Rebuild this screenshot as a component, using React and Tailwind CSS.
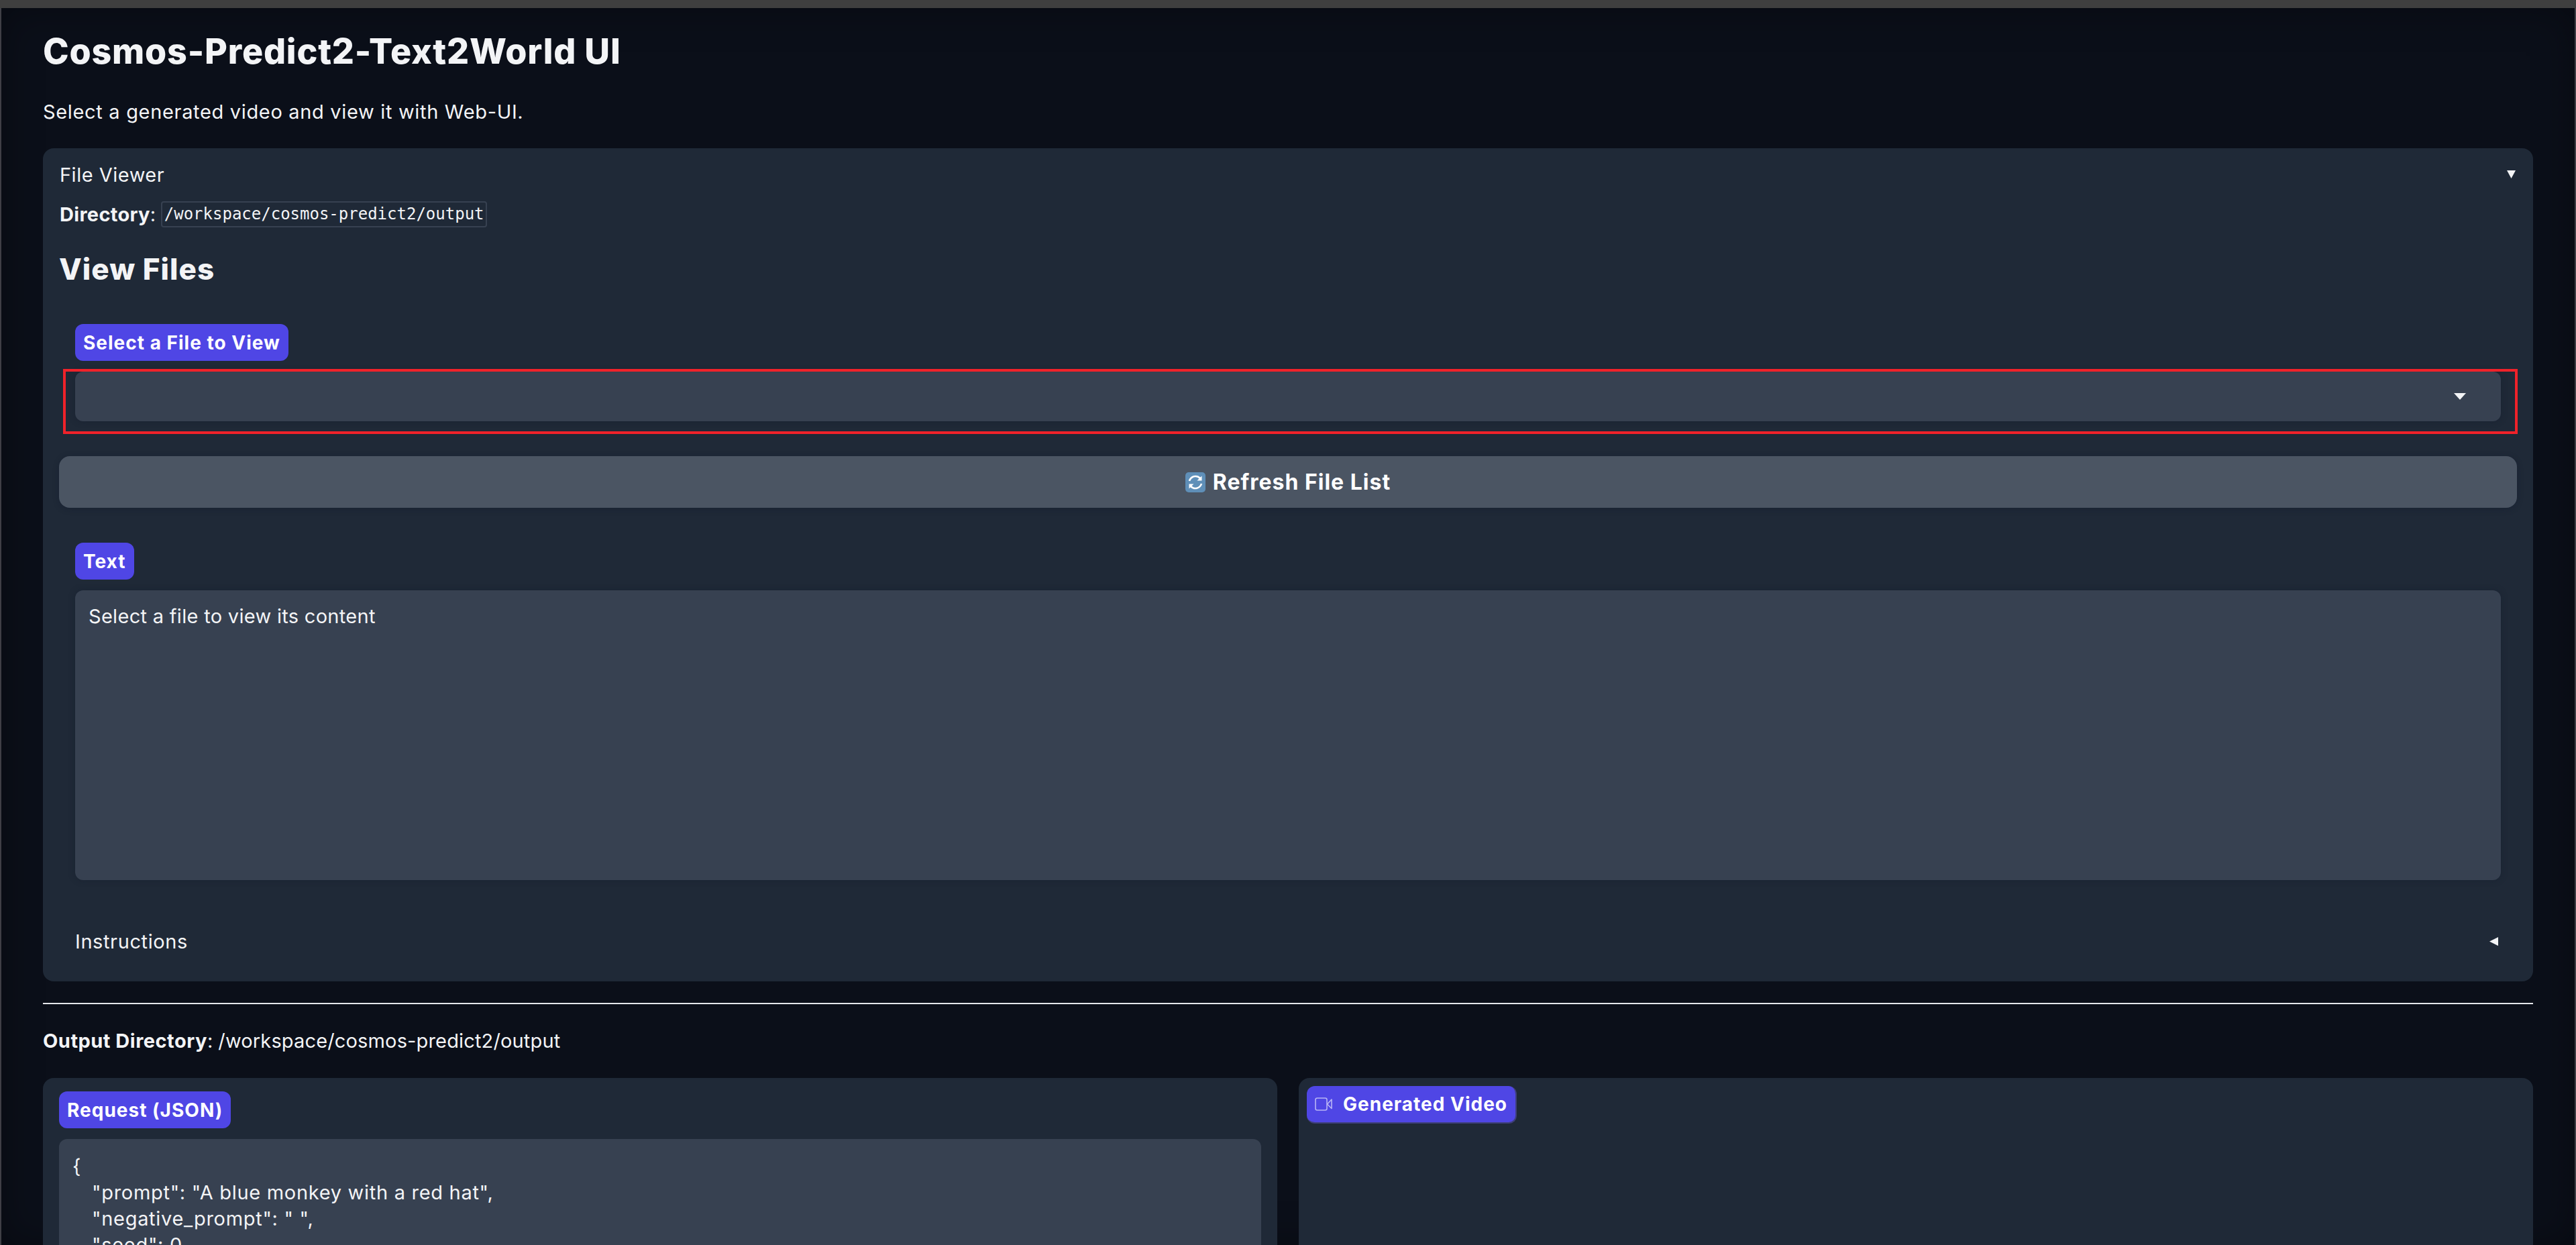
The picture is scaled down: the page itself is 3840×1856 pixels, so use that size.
const sans = "font-['Inter','Liberation_Sans',sans-serif]";

function Tri({ dir = "down", className = "" }) {
  const pts = dir === "down" ? "0,0 100,0 50,100" : "100,0 100,100 0,50";
  return (
    <svg viewBox="0 0 100 100" preserveAspectRatio="none" className={className}>
      <polygon points={pts} fill="#f3f4f6" />
    </svg>
  );
}

function Label({ children }) {
  return (
    <span className="flex h-[55px] items-center rounded-[12px] bg-[#4f46e5] px-[12px] text-[28px] font-bold tracking-[1px] text-white">
      {children}
    </span>
  );
}

function RefreshEmoji() {
  return (
    <svg viewBox="0 0 30 30" className="h-[30px] w-[30px] shrink-0">
      <rect width="30" height="30" rx="5" fill="#5f8fb8" />
      <path d="M6 13a9.500 9.500 0 0 1 16-4" fill="none" stroke="#fff" strokeWidth="2.600" />
      <path d="M24.500 5.500v7h-7z" fill="#fff" />
      <path d="M24 17a9.500 9.500 0 0 1-16 4" fill="none" stroke="#fff" strokeWidth="2.600" />
      <path d="M5.500 24.500v-7h7z" fill="#fff" />
    </svg>
  );
}

function VideoIcon() {
  return (
    <svg viewBox="0 0 26 20" className="h-[20px] w-[26px] shrink-0" fill="none" stroke="#b9b5f5" strokeWidth="1.600" strokeLinejoin="round">
      <rect x="1" y="1" width="17" height="18" rx="2.500" />
      <path d="M25 3 18.500 10 25 16.500z" />
    </svg>
  );
}

export default function App() {
  return (
    <div className={`flex h-screen flex-col overflow-hidden bg-[#0b0f19] text-[#f3f4f6] ${sans}`}>
      <div className="h-[12px] shrink-0 bg-[#3f3f3f]" />
      <div className="flex min-h-0 flex-1 flex-col border-x-2 border-[#3f3f46] px-[62px] shadow-[inset_0_0_60px_rgba(0,0,0,0.35)]">
        <h1 className="mt-[37px] flex h-[56px] shrink-0 items-center text-[52px] leading-none font-extrabold tracking-[0.8px]">Cosmos-Predict2-Text2World UI</h1>
        <p className="mt-[43px] flex h-[36px] shrink-0 items-center text-[29px] leading-none tracking-[0.67px]">Select a generated video and view it with Web-UI.</p>

        <section className="mt-[37px] flex h-[1242px] shrink-0 flex-col rounded-[16px] bg-[#1f2937] px-[24px]">
          <div className="mt-[19px] flex h-[40px] shrink-0 items-center justify-between text-[29px] leading-none">
            <span className="ml-[1px] tracking-[0.5px]">File Viewer</span>
            <Tri className="mr-[2px] h-[12px] w-[13px]" />
          </div>
          <div className="mt-[19px] ml-[1px] flex h-[40px] shrink-0 items-center text-[29px] leading-none">
            <b className="font-bold tracking-[0.3px]">Directory</b>
            <span>:</span>
            <code className="ml-[8px] flex h-[39px] w-[486px] items-center justify-center rounded-[4px] border-2 border-[#374151] font-['DejaVu_Sans_Mono',monospace] text-[24px] leading-none">/workspace/cosmos-predict2/output</code>
          </div>
          <h2 className="mt-[37px] flex h-[50px] shrink-0 items-center text-[44px] leading-none font-extrabold tracking-[1px]">View Files</h2>

          <div className="mt-[57px] ml-[24px] flex shrink-0">
            <Label>Select a File to View</Label>
          </div>
          <div className="relative mt-[16px] mr-[24px] ml-[24px] flex h-[74px] shrink-0 items-center justify-end rounded-[12px] bg-[#374151] pr-[52px] shadow-[0_0_8px_rgba(20,30,45,0.5)]">
            <Tri className="h-[10px] w-[18px]" />
            <div className="pointer-events-none absolute top-[-4px] right-[-25px] bottom-[-19px] left-[-18px] border-4 border-[#f0222a]" />
          </div>

          <button className="mt-[52px] flex h-[77px] shrink-0 items-center justify-center gap-[11px] rounded-[16px] bg-[#4b5563] text-[32px] font-bold tracking-[1px] text-white shadow-[0_2px_8px_rgba(15,23,42,0.35)]">
            <RefreshEmoji />
            <span>Refresh File List</span>
          </button>

          <div className="mt-[52px] ml-[24px] flex shrink-0">
            <Label>Text</Label>
          </div>
          <div className="mt-[16px] mr-[24px] ml-[24px] h-[432px] shrink-0 rounded-[12px] bg-[#374151] px-[20px] py-[20px] text-[29px] leading-[38px] tracking-[0.3px] shadow-[0_0_8px_rgba(20,30,45,0.5)]">
            Select a file to view its content
          </div>

          <div className="mt-[71px] mr-[28px] ml-[24px] flex h-[40px] shrink-0 items-center justify-between text-[29px] leading-none tracking-[0.6px]">
            <span>Instructions</span>
            <Tri dir="left" className="h-[13px] w-[13px]" />
          </div>
        </section>

        <hr className="mt-[32px] h-[2px] shrink-0 border-0 bg-[#e5e7eb]" />

        <p className="mt-[35px] flex h-[38px] shrink-0 items-center text-[29px] leading-none">
          <b className="font-bold tracking-[0.5px]">Output Directory</b>
          <span>:</span>
          <span className="ml-[8px] tracking-[0.15px]">/workspace/cosmos-predict2/output</span>
        </p>

        <div className="mt-[37px] grid min-h-0 flex-1 grid-cols-2 gap-[32px]">
          <div className="flex min-h-0 flex-col overflow-hidden rounded-t-[16px] bg-[#1f2937] px-[24px] pt-[20px]">
            <div className="flex shrink-0">
              <Label>Request (JSON)</Label>
            </div>
            <div className="mt-[16px] flex-1 rounded-t-[12px] bg-[#374151] px-[20px] pt-[21px] text-[29px] leading-[39px] tracking-[0.7px]">
              <div>{"{"}</div>
              <div className="pl-[29px]">"prompt": "A blue monkey with a red hat",</div>
              <div className="pl-[29px]">"negative_prompt": " ",</div>
              <div className="pl-[29px]">"seed": 0,</div>
            </div>
          </div>
          <div className="overflow-hidden rounded-t-[16px] bg-[#1f2937] pt-[12px] pl-[12px]">
            <div className="inline-flex h-[56px] items-center gap-[16px] rounded-[12px] border-r-2 border-b-2 border-[#3f3f7a] bg-[#4f46e5] px-[12px] text-[28px] font-bold tracking-[1px] text-white">
              <VideoIcon />
              <span>Generated Video</span>
            </div>
          </div>
        </div>
      </div>
    </div>
  );
}
